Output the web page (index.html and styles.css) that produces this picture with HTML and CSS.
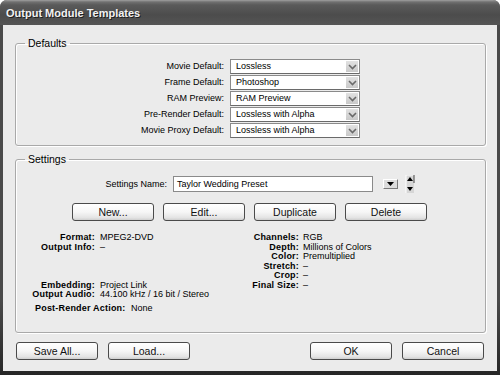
FILE: index.html
```html
<!DOCTYPE html>
<html lang="en">
  <head>
    <meta charset="UTF-8" />
    <title>Output Module Templates</title>
    <link rel="stylesheet" href="styles.css">
  </head>
  <body>
    <div class="window">
      <div class="titlebar">Output Module Templates</div>

      <div class="client">
        <fieldset class="group defaults">
          <legend>Defaults</legend>
          <div class="defaults-grid">
            <label>Movie Default:</label>
            <div class="select"><span>Lossless</span><i class="drop"><svg width="9" height="6" viewBox="0 0 9 6"><path d="M1 1 L4.5 4.5 L8 1" fill="none" stroke="#6a6a6a" stroke-width="1.6"/></svg></i></div>

            <label>Frame Default:</label>
            <div class="select"><span>Photoshop</span><i class="drop"><svg width="9" height="6" viewBox="0 0 9 6"><path d="M1 1 L4.5 4.5 L8 1" fill="none" stroke="#6a6a6a" stroke-width="1.6"/></svg></i></div>

            <label>RAM Preview:</label>
            <div class="select"><span>RAM Preview</span><i class="drop"><svg width="9" height="6" viewBox="0 0 9 6"><path d="M1 1 L4.5 4.5 L8 1" fill="none" stroke="#6a6a6a" stroke-width="1.6"/></svg></i></div>

            <label>Pre-Render Default:</label>
            <div class="select"><span>Lossless with Alpha</span><i class="drop"><svg width="9" height="6" viewBox="0 0 9 6"><path d="M1 1 L4.5 4.5 L8 1" fill="none" stroke="#6a6a6a" stroke-width="1.6"/></svg></i></div>

            <label>Movie Proxy Default:</label>
            <div class="select"><span>Lossless with Alpha</span><i class="drop"><svg width="9" height="6" viewBox="0 0 9 6"><path d="M1 1 L4.5 4.5 L8 1" fill="none" stroke="#6a6a6a" stroke-width="1.6"/></svg></i></div>
          </div>
        </fieldset>

        <fieldset class="group settings">
          <legend>Settings</legend>

          <div class="name-row">
            <label>Settings Name:</label>
            <div class="textbox">Taylor Wedding Preset</div>
            <span class="menu-btn">
              <svg width="7" height="4" viewBox="0 0 7 4"><path d="M0 0 H7 L3.5 4 Z" fill="#000"/></svg>
            </span>
            <span class="spinner">
              <svg width="11" height="18" viewBox="0 0 11 18">
                <rect x="2" y="0" width="8" height="18" fill="#d6d6d6"/>
                <path d="M2 0 H10 M2 0 V18" stroke="#fff" stroke-width="1"/>
                <path d="M10 0 V8" stroke="#444" stroke-width="1"/>
                <path d="M3 6 H9 L6 2 Z" fill="#000"/>
                <path d="M3 12 H9 L6 16 Z" fill="#000"/>
              </svg>
            </span>
          </div>

          <div class="actions">
            <button class="btn">New...</button>
            <button class="btn">Edit...</button>
            <button class="btn">Duplicate</button>
            <button class="btn">Delete</button>
          </div>

          <div class="info">
            <dl class="info-col info-left">
              <dt>Format:</dt><dd>MPEG2-DVD</dd>
              <dt>Output Info:</dt><dd>–</dd>
              <div class="info-gap"></div>
              <dt>Embedding:</dt><dd>Project Link</dd>
              <dt>Output Audio:</dt><dd>44.100 kHz / 16 bit / Stereo</dd>
            </dl>
            <dl class="info-col info-right">
              <dt>Channels:</dt><dd>RGB</dd>
              <dt>Depth:</dt><dd>Millions of Colors</dd>
              <dt>Color:</dt><dd>Premultiplied</dd>
              <dt>Stretch:</dt><dd>–</dd>
              <dt>Crop:</dt><dd>–</dd>
              <dt>Final Size:</dt><dd>–</dd>
            </dl>
          </div>

          <p class="post-render"><b>Post-Render Action:</b> None</p>
        </fieldset>

        <div class="footer">
          <div class="footer-group">
            <button class="btn">Save All...</button>
            <button class="btn">Load...</button>
          </div>
          <div class="footer-group">
            <button class="btn">OK</button>
            <button class="btn">Cancel</button>
          </div>
        </div>
      </div>
    </div>
  </body>
</html>
```

FILE: styles.css
```css
body {
  margin: 0;
  background: #fff;
  font-family: "Liberation Sans", Arial, sans-serif;
}

.window {
  width: 500px;
  height: 375px;
  box-sizing: border-box;
  display: flex;
  flex-direction: column;
  padding: 0 3px 4px;
  background: linear-gradient(to bottom, #4a4a4a 80%, #262626 100%);
  border-radius: 7px 7px 0 0;
  overflow: hidden;
}

.titlebar {
  height: 25px;
  margin: 0 -3px;
  padding-left: 6px;
  box-sizing: border-box;
  line-height: 27px;
  font-size: 11px;
  font-weight: bold;
  color: #f2f2f2;
  text-shadow: 1px 1px 0 #1e1e1e;
  background: linear-gradient(to bottom, #a0a0a0 0, #707070 2px, #5a5a5a 5px, #4c4c4c 60%, #555 100%);
}

.client {
  flex: 1;
  display: flex;
  flex-direction: column;
  padding: 12px 11px 0 12px;
  background: #ebebeb;
}

/* group boxes */
.group {
  margin: 0;
  padding: 0;
  border: 1px solid #a9a9a9;
  border-radius: 3px;
  box-shadow: inset 1px 1px 0 #fff, 1px 1px 0 #fff;
  min-width: 0;
}

.group legend {
  margin-left: 9px;
  padding: 0 3px;
  font-size: 10.5px;
  line-height: 12px;
  color: #000;
}

.defaults {
  padding: 10px 0 7px;
}

.defaults-grid {
  display: grid;
  grid-template-columns: 208px 130px;
  grid-auto-rows: 15px;
  column-gap: 6px;
  row-gap: 1px;
  font-size: 9px;
}

.defaults-grid label {
  text-align: right;
  line-height: 15px;
}

.select {
  position: relative;
  box-sizing: border-box;
  border: 1px solid #8a8a8a;
  border-bottom-color: #6a6a6a;
  background: #fff;
  line-height: 13px;
  padding-left: 5px;
}

.select .drop {
  position: absolute;
  top: 1px;
  right: 1px;
  width: 12px;
  height: 11px;
  display: flex;
  align-items: center;
  justify-content: center;
  background: linear-gradient(to bottom, #e2e2e2, #c9c9c9);
}

/* settings */
.settings {
  margin-top: 7px;
  padding: 10px 0 19px;
}

.name-row {
  display: flex;
  align-items: center;
  height: 18px;
  font-size: 9px;
}

.name-row label {
  width: 151px;
  text-align: right;
  margin-right: 6px;
}

.textbox {
  width: 200px;
  height: 16px;
  box-sizing: border-box;
  border: 1px solid #8a8a8a;
  background: #fff;
  line-height: 14px;
  padding-left: 3px;
}

.menu-btn {
  display: flex;
  align-items: center;
  justify-content: center;
  width: 15px;
  height: 10px;
  margin-left: 10px;
  box-sizing: border-box;
  background: #dcdcdc;
  border: 1px solid;
  border-color: #fff #7a7a7a #7a7a7a #fff;
}

.spinner {
  display: flex;
  margin-left: 6px;
}

.actions {
  display: flex;
  gap: 9px;
  margin: 10px 0 0 56px;
}

.btn {
  width: 82px;
  height: 18px;
  padding: 0;
  box-sizing: border-box;
  font-family: "Liberation Sans", Arial, sans-serif;
  font-size: 10.5px;
  color: #111;
  border: 1px solid #4a4a4a;
  border-radius: 3px;
  background: linear-gradient(to bottom, #fff 0, #f6f6f6 50%, #e4e4e4 85%, #cfcfcf 100%);
}

/* info */
.info {
  display: flex;
  margin-top: 12px;
  font-size: 9px;
  line-height: 9.5px;
}

.info-col {
  margin: 0;
  display: grid;
  grid-auto-rows: 9.5px;
  align-content: start;
}

.info-col dt {
  font-weight: bold;
  text-align: right;
  letter-spacing: 0.2px;
}

.info-col dd {
  margin: 0;
  white-space: nowrap;
}

.info-left {
  width: 234px;
  grid-template-columns: 79px 1fr;
  column-gap: 5px;
}

.info-gap {
  grid-column: 1 / -1;
  grid-row: span 3;
}

.info-right {
  grid-template-columns: 49px 1fr;
  column-gap: 4px;
}

.post-render {
  margin: 4px 0 0 19px;
  font-size: 9px;
  line-height: 9.5px;
}

.post-render b {
  letter-spacing: 0.2px;
  margin-right: 3px;
}

/* footer */
.footer {
  display: flex;
  justify-content: space-between;
  margin: 9px 2px 0 1px;
}

.footer-group {
  display: flex;
  gap: 10px;
}
```
